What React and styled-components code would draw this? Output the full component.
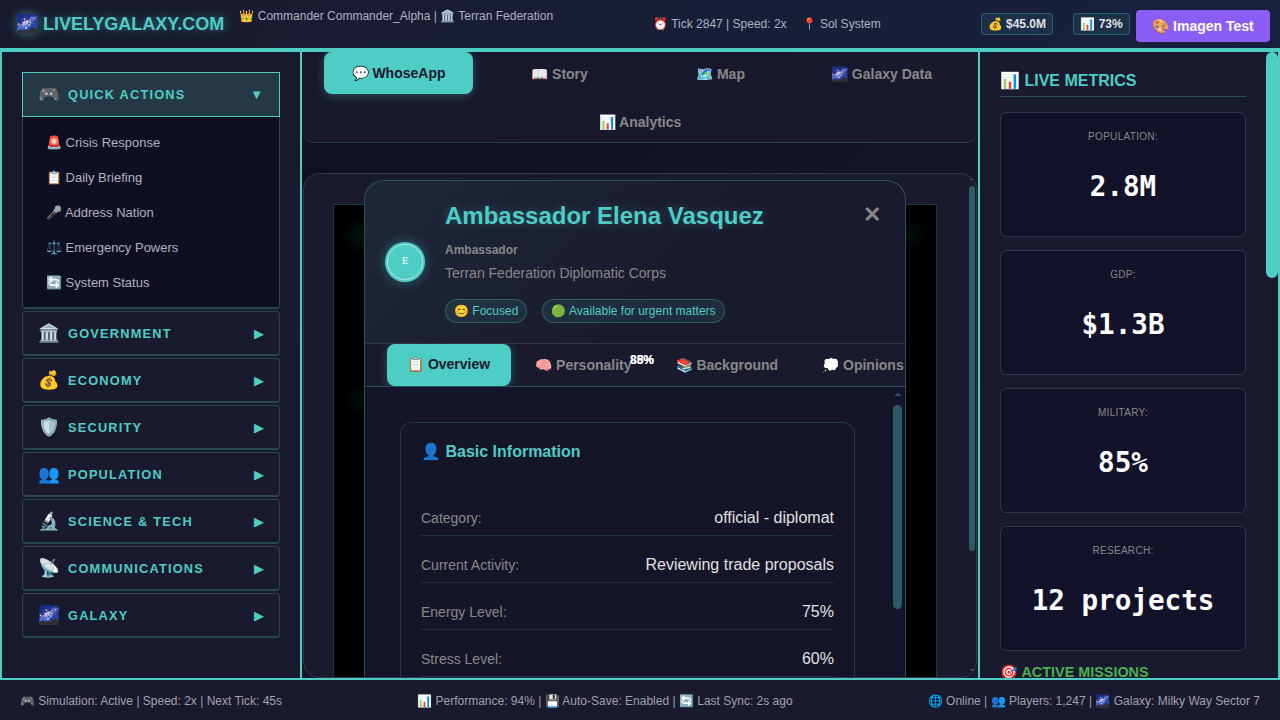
import React from "react";
import styled, { createGlobalStyle } from "styled-components";

const Global = createGlobalStyle`
  html, body { margin: 0; padding: 0; height: 100%; overflow: hidden; background: #0f0f23; }
  * { box-sizing: border-box; }
  body { font-family: "Liberation Sans", Arial, sans-serif; color: #e0e0e0; }
`;

const teal = "#4ecdc4";
const line = "rgba(78,205,196,0.3)";
const thumb = "#2c5a64";

const Page = styled.div`
  width: 1280px; height: 720px; display: flex; flex-direction: column; overflow: hidden;
`;
const Header = styled.header`
  height: 50px; flex: none; display: flex; align-items: center; justify-content: space-between;
  padding: 0 10px 0 16px; border-bottom: 2px solid ${teal};
  background: linear-gradient(135deg, #1a1a2e 0%, #16213e 100%);
`;
const HeaderLeft = styled.div`display: flex; align-items: center; gap: 15px;`;
const Logo = styled.div`
  font-size: 18px; font-weight: 700; color: ${teal}; white-space: pre;
  text-shadow: 0 0 10px rgba(78,205,196,0.5);
`;
const UserInfo = styled.div`font-size: 12px; color: #b0b0c0; margin-bottom: 16px; white-space: pre;`;
const HeaderCenter = styled.div`display: flex; gap: 15px; font-size: 12px; color: #b0b0c0;`;
const HeaderRight = styled.div`display: flex; align-items: center;`;
const Pill = styled.div`
  height: 22px; min-width: ${p => p.$width}px; display: flex; align-items: center; justify-content: center; padding: 0 6px;
  font-size: 12px; font-weight: 700; color: #e0e0e0; white-space: pre;
  background: rgba(78,205,196,0.1); border: 1px solid ${line}; border-radius: 4px; margin-right: ${p => p.$gap}px;
`;
const ImagenButton = styled.button`
  width: 134px; height: 32px; margin-top: 4px; border: 0; border-radius: 4px; background: #8b5cf6; color: #fff;
  font: 700 14px "Liberation Sans", Arial, sans-serif; padding: 0; white-space: pre;
`;

const Main = styled.main`
  flex: 1; min-height: 0; display: flex; border-top: 2px solid ${teal};
`;
const Sidebar = styled.aside`
  width: 302px; flex: none; padding: 20px; background: #1a1a2e;
  border-left: 2px solid ${teal}; border-right: 2px solid ${teal}; overflow: hidden;
`;
const Section = styled.section`
  margin-bottom: 2px; border: 1px solid rgba(78,205,196,0.25); border-bottom-width: 2px; border-radius: 4px;
`;
const SectionHead = styled.div`
  height: ${p => (p.$open ? 45 : 42)}px; display: flex; align-items: center; padding: 0 15px;
  color: ${teal};
  ${p => p.$open && `margin: -1px -1px 0; padding: 0 16px 1px 15px; border: 1px solid ${teal}; background: #243845;`}
`;
const SectionIcon = styled.span`font-size: 17.6px; width: 30px; flex: none;`;
const SectionLabel = styled.span`
  flex: 1; font-size: 12.8px; font-weight: 700; letter-spacing: 1.2px; text-transform: uppercase;
`;
const SectionArrow = styled.span`font-size: 13px;`;
const Menu = styled.div`background: #0f0f23; padding: 8px 0 7px;`;
const MenuItem = styled.div`
  height: 35px; display: flex; align-items: center; padding-left: 23px; font-size: 13px; color: #b0b0c0; white-space: pre;
`;

const Center = styled.div`
  width: 676px; flex: none; display: flex; flex-direction: column; background: linear-gradient(135deg, #0f0f23, #1a1a2e);
`;
const TabBar = styled.nav`
  height: 91px; flex: none; display: flex; flex-wrap: wrap; justify-content: center; align-content: flex-start;
  gap: 6px 12px; padding-top: 1px; background: rgba(26,26,46,0.8);
  border-bottom: 1px solid rgba(78,205,196,0.2); border-radius: 0 0 12px 12px;
`;
const Tab = styled.div`
  width: 149px; height: 42px; display: flex; align-items: center; justify-content: center; border-radius: 8px;
  font-size: 14px; font-weight: 700; white-space: pre;
  color: ${p => (p.$active ? "#1a1a2e" : "#888")};
  background: ${p => (p.$active ? teal : "transparent")};
  ${p => p.$active && `transform: translateY(-1px); box-shadow: 0 2px 10px rgba(78,205,196,0.3);`}
`;
const GamePanel = styled.div`
  position: relative; height: 505px; margin: 30px 1px 0; border: 1px solid #33334a; border-radius: 16px;
  background: #1a1a2e; overflow: hidden; padding: 30px 29px;
`;
const Viewport = styled.div`
  width: 604px; height: 618px; border: 1px solid ${line}; background:
    radial-gradient(circle 18px at 27px 30px, rgba(0,255,120,0.09), transparent),
    radial-gradient(circle 18px at 575px 30px, rgba(0,255,120,0.06), transparent),
    radial-gradient(circle 18px at 27px 195px, rgba(0,255,120,0.06), transparent),
    #000;
`;
const ScrollThumb = styled.div`
  position: absolute; right: ${p => p.$right}px; top: ${p => p.$top}px; width: ${p => p.$width}px; height: ${p => p.$height}px;
  background: ${p => p.$color || thumb}; border-radius: ${p => p.$width / 2}px;
`;
const ScrollArrow = styled.div`
  position: absolute; right: ${p => p.$right}px; top: ${p => p.$top}px; width: 0; height: 0;
  border-left: ${p => p.$size}px solid transparent; border-right: ${p => p.$size}px solid transparent;
  ${p => (p.$down ? `border-top: ${p.$size - 1}px solid ${thumb};` : `border-bottom: ${p.$size - 1}px solid ${thumb};`)}
`;
const Modal = styled.div`
  position: absolute; left: 60px; top: 6px; width: 542px; height: 600px; display: flex; flex-direction: column;
  background: #1a1a2e; border: 1px solid ${line}; border-radius: 20px 20px 0 0; overflow: hidden;
`;
const ModalHead = styled.div`
  height: 163px; flex: none; display: flex; align-items: center; gap: 20px; padding: 20px 24px 20px 20px;
  background: linear-gradient(135deg, rgba(78,205,196,0.08), rgba(78,205,196,0) 60%);
  border-bottom: 1px solid #33334a;
`;
const Avatar = styled.div`
  position: relative; width: 40px; height: 40px; flex: none; border-radius: 50%; background: ${teal};
  display: flex; align-items: center; justify-content: center; padding-bottom: 5px;
  font: 400 11px "Liberation Serif", serif; color: #fff; box-shadow: 0 0 12px rgba(78,205,196,0.4);
  &::after { content: ""; position: absolute; inset: 2px; border: 1px solid rgba(255,255,255,0.55); border-radius: 50%; }
`;
const ModalInfo = styled.div`flex: 1; min-width: 0;`;
const ModalTitle = styled.h2`
  margin: 0 0 13px; font-size: 24px; line-height: 29px; font-weight: 700; color: ${teal}; white-space: nowrap;
  text-shadow: 0 0 10px rgba(78,205,196,0.3);
`;
const Role = styled.div`font-size: 12px; line-height: 14px; font-weight: 700; color: #888; margin-bottom: 8px;`;
const Org = styled.div`font-size: 14px; line-height: 16px; color: #888; margin-bottom: 18px;`;
const Badges = styled.div`display: flex; gap: 15px;`;
const Badge = styled.span`
  height: 24px; display: flex; align-items: center; padding: 0 8px; font-size: 12px; color: ${teal}; white-space: pre;
  background: rgba(78,205,196,0.1); border: 1px solid ${line}; border-radius: 12px;
`;
const Close = styled.div`
  align-self: flex-start; margin-top: 2px; font-size: 22px; line-height: 24px; font-weight: 700; color: #888;
`;
const ModalTabs = styled.div`
  height: 43px; flex: none; display: flex; gap: 4px; padding-left: 22px; overflow: hidden; border-bottom: 1px solid ${line};
`;
const ModalTab = styled.div`
  flex: none; height: 42px; display: flex; align-items: center; padding: 0 20px; border-radius: 8px; white-space: pre;
  font-size: 14px; font-weight: 700;
  color: ${p => (p.$active ? "#1a1a2e" : "#888")};
  background: ${p => (p.$active ? teal : "transparent")};
  ${p => p.$active && `padding: 0 21px 2px 20px; box-shadow: 0 2px 10px rgba(78,205,196,0.3);`}
`;
const FloatingValue = styled.span`
  position: absolute; left: ${p => p.$x}px; top: 172px; font-size: 12px; line-height: 14px; font-weight: 700; color: #fff;
`;
const ModalBody = styled.div`
  flex: 1; min-height: 0; padding: 35px 50px 35px 35px; overflow: hidden; background: #14142a;
`;
const InfoCard = styled.div`
  min-height: 650px; padding: 20px; border: 1px solid rgba(78,205,196,0.2); border-radius: 12px; background: #151529;
`;
const CardTitle = styled.h3`
  margin: 0 0 40px; font-size: 16px; line-height: 18px; font-weight: 700; color: ${teal}; white-space: pre;
`;
const Row = styled.div`
  display: flex; justify-content: space-between; align-items: center; padding: 8px 0; margin-bottom: 12px;
  border-bottom: 1px solid rgba(78,205,196,0.15); line-height: 18px;
`;
const RowLabel = styled.span`font-size: 14px; color: #888;`;
const RowValue = styled.span`font-size: 16px; color: #e0e0e0;`;

const Metrics = styled.aside`
  position: relative; width: 302px; flex: none; padding: 20px 32px 0 20px; background: #1a1a2e;
  border-left: 2px solid ${teal}; border-right: 2px solid ${teal}; overflow: hidden;
`;
const MetricsTitle = styled.h3`
  margin: 0 0 15px; padding-bottom: 6px; border-bottom: 1px solid ${line};
  font-size: 16px; line-height: 18px; font-weight: 700; color: ${teal}; white-space: pre;
`;
const MetricCard = styled.div`
  height: 125px; margin-bottom: 13px; padding-top: 18px; text-align: center; background: #12122a;
  border: 1px solid #33334a; border-radius: 6px;
`;
const MetricLabel = styled.div`font-size: 10px; line-height: 12px; letter-spacing: 0.3px; text-transform: uppercase; color: #888;`;
const MetricValue = styled.div`
  margin-top: 27px; font: 700 27.6px/33px "DejaVu Sans Mono", monospace; color: #fff; white-space: nowrap;
`;
const Missions = styled.h4`
  margin: 0; font-size: 14.4px; line-height: 17px; font-weight: 700; color: #4caf50; white-space: pre;
`;

const Footer = styled.footer`
  height: 42px; flex: none; display: flex; align-items: center; justify-content: space-between; padding: 2px 20px 0;
  border-top: 2px solid ${teal}; background: #1a1a2e; font-size: 12px; color: #a0a0b0; white-space: pre;
`;

const sections = [
  ["🏛️", "Government"], ["💰", "Economy"], ["🛡️", "Security"], ["👥", "Population"],
  ["🔬", "Science & Tech"], ["📡", "Communications"], ["🌌", "Galaxy"],
];
const quick = ["🚨 Crisis Response", "📋 Daily Briefing", "🎤 Address Nation", "⚖️ Emergency Powers", "🔄 System Status"];
const tabs = ["💬 WhoseApp", "📖 Story", "🗺️ Map", "🌌 Galaxy Data", "📊 Analytics"];
const modalTabs = ["📋 Overview", "🧠 Personality", "📚 Background", "💭 Opinions"];
const rows = [
  ["Category:", "official - diplomat"], ["Current Activity:", "Reviewing trade proposals"],
  ["Energy Level:", "75%"], ["Stress Level:", "60%"],
];
const metrics = [["Population:", "2.8M"], ["GDP:", "$1.3B"], ["Military:", "85%"], ["Research:", "12 projects"]];

export default function App() {
  return (
    <Page>
      <Global />
      <Header>
        <HeaderLeft>
          <Logo>🌌 LIVELYGALAXY.COM</Logo>
          <UserInfo>👑 Commander Commander_Alpha | 🏛️ Terran Federation</UserInfo>
        </HeaderLeft>
        <HeaderCenter>
          <span>⏰ Tick 2847 | Speed: 2x</span>
          <span>📍 Sol System</span>
        </HeaderCenter>
        <HeaderRight>
          <Pill $gap={20} $width={72}>💰 $45.0M</Pill>
          <Pill $gap={6} $width={57}>📊 73%</Pill>
          <ImagenButton>🎨 Imagen Test</ImagenButton>
        </HeaderRight>
      </Header>
      <Main>
        <Sidebar>
          <Section>
            <SectionHead $open>
              <SectionIcon>🎮</SectionIcon>
              <SectionLabel>Quick Actions</SectionLabel>
              <SectionArrow>▼</SectionArrow>
            </SectionHead>
            <Menu>{quick.map(q => <MenuItem key={q}>{q}</MenuItem>)}</Menu>
          </Section>
          {sections.map(([icon, label]) => (
            <Section key={label}>
              <SectionHead>
                <SectionIcon>{icon}</SectionIcon>
                <SectionLabel>{label}</SectionLabel>
                <SectionArrow>▶</SectionArrow>
              </SectionHead>
            </Section>
          ))}
        </Sidebar>
        <Center>
          <TabBar>{tabs.map((t, i) => <Tab key={t} $active={i === 0}>{t}</Tab>)}</TabBar>
          <GamePanel>
            <Viewport />
            <Modal>
              <ModalHead>
                <Avatar>E</Avatar>
                <ModalInfo>
                  <ModalTitle>Ambassador Elena Vasquez</ModalTitle>
                  <Role>Ambassador</Role>
                  <Org>Terran Federation Diplomatic Corps</Org>
                  <Badges>
                    <Badge>😊 Focused</Badge>
                    <Badge>🟢 Available for urgent matters</Badge>
                  </Badges>
                </ModalInfo>
                <Close>✕</Close>
              </ModalHead>
              <ModalTabs>{modalTabs.map((t, i) => <ModalTab key={t} $active={i === 0}>{t}</ModalTab>)}</ModalTabs>
              <ModalBody>
                <InfoCard>
                  <CardTitle>👤 Basic Information</CardTitle>
                  {rows.map(([k, v]) => (
                    <Row key={k}><RowLabel>{k}</RowLabel><RowValue>{v}</RowValue></Row>
                  ))}
                </InfoCard>
              </ModalBody>
              <ScrollArrow $right={3} $top={212} $size={4} />
              <ScrollThumb $right={3} $top={224} $width={9} $height={204} />
              <FloatingValue $x={265}>88%</FloatingValue>
              <FloatingValue $x={265}>85%</FloatingValue>
            </Modal>
            <ScrollArrow $right={1} $top={4} $size={3} />
            <ScrollThumb $right={1} $top={12} $width={6} $height={365} />
            <ScrollArrow $right={1} $top={495} $size={3} $down />
          </GamePanel>
        </Center>
        <Metrics>
          <MetricsTitle>📊 LIVE METRICS</MetricsTitle>
          {metrics.map(([k, v]) => (
            <MetricCard key={k}><MetricLabel>{k}</MetricLabel><MetricValue>{v}</MetricValue></MetricCard>
          ))}
          <Missions>🎯 ACTIVE MISSIONS</Missions>
          <ScrollThumb $right={0} $top={0} $width={12} $height={226} $color={teal} />
        </Metrics>
      </Main>
      <Footer>
        <span>🎮 Simulation: Active | Speed: 2x | Next Tick: 45s</span>
        <span>📊 Performance: 94% | 💾 Auto-Save: Enabled | 🔄 Last Sync: 2s ago</span>
        <span>🌐 Online | 👥 Players: 1,247 | 🌌 Galaxy: Milky Way Sector 7</span>
      </Footer>
    </Page>
  );
}
